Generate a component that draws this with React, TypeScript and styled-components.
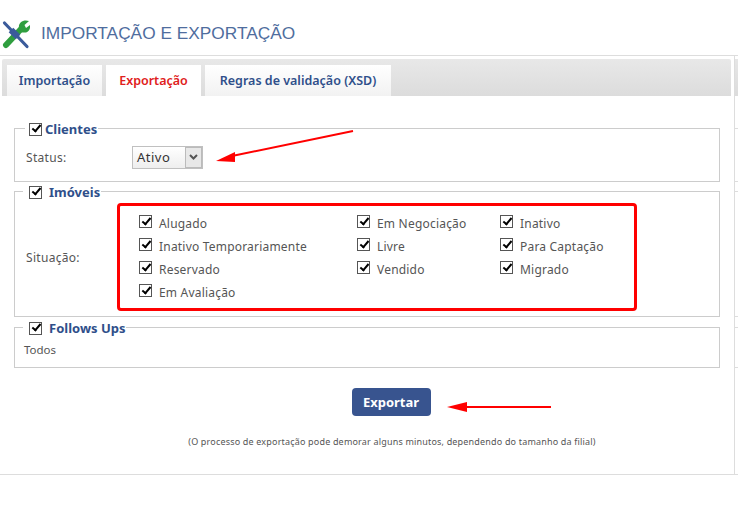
import React from 'react';
import styled, { createGlobalStyle } from 'styled-components';

const GlobalStyle = createGlobalStyle`
    html, body {
        margin: 0;
        padding: 0;
        background: #fff;
    }

    body {
        font-family: "Noto Sans", "Liberation Sans", sans-serif;
        font-size: 12px;
        color: #555;
    }
`;

const IconWrap = styled.span`
    display: flex;
    margin: 2px 1px 0 0;
`;

const ToolsIcon = () => (
    <IconWrap>
        <svg width="28" height="29" viewBox="0 0 28 29">
            <path d="M4 25 L20 8" stroke="#2f9e3f" strokeWidth="6" strokeLinecap="round" />
            <path d="M17 8 C16 3 21 -1 27 1 L22.500 5 L24 8 L28 5 C29 11 24 14 19 12 Z" fill="#2f9e3f" />
            <path d="M2.500 3 L25 26.500" stroke="#3b5b9b" strokeWidth="3.200" strokeLinecap="round" />
            <path d="M9 10 L16 17" stroke="#3b5b9b" strokeWidth="6.500" />
        </svg>
    </IconWrap>
);

const Annotations = styled.svg`
    position: absolute;
    left: 0;
    top: 0;
    pointer-events: none;
`;

const Page = styled.div`
    position: relative;
    width: 738px;
    height: 507px;
    overflow: hidden;
`;

const Header = styled.header`
    display: flex;
    align-items: center;
    gap: 10px;
    height: 56px;
    padding: 12px 0 0 2px;
    box-sizing: border-box;
    border-bottom: 1px solid #ddd;
`;

const Title = styled.h1`
    margin: 0;
    font-family: "Liberation Sans", sans-serif;
    font-size: 17.3px;
    font-weight: 400;
    color: #4f6d9e;
`;

const Panel = styled.div`
    display: flex;
    align-items: flex-start;
`;

const Main = styled.main`
    width: 735px;
    box-sizing: border-box;
    border-right: 1px solid #ddd;
`;

// lines of the next panel, which only just shows at the right edge
const sliverLines = [72, 125, 135, 260, 271, 311, 418]
    .map(y => `linear-gradient(#ddd, #ddd) 0 ${y}px / 100% 1px no-repeat`)
    .join(', ');

const Sliver = styled.div`
    flex: none;
    width: 3px;
    height: 419px;
    background: ${sliverLines}, linear-gradient(#e6e6e6, #dcdcdc) 0 3px / 100% 37px no-repeat;
`;

const TabBar = styled.div`
    display: flex;
    gap: 4px;
    margin: 3px 3px 0 2px;
    padding: 6px 0 0 5px;
    height: 31px;
    border-radius: 2px 2px 0 0;
    background: linear-gradient(#e8e8e8, #dcdcdc);
`;

const Tab = styled.div<{ $active?: boolean; $width: number }>`
    display: flex;
    align-items: center;
    justify-content: center;
    width: ${p => p.$width}px;
    font-size: 12.5px;
    font-weight: 600;
    color: ${p => (p.$active ? '#e02020' : '#2f4f8a')};
    background: ${p => (p.$active ? '#fff' : 'linear-gradient(#fff, #f2f2f2)')};
`;

const Content = styled.div`
    height: 379px;
    box-sizing: border-box;
    padding: 23px 14px 0;
    border-bottom: 1px solid #ddd;
`;

const Group = styled.fieldset<{ $height: number; $after?: number }>`
    margin: 0 0 ${p => p.$after ?? 0}px;
    padding: 0 10px;
    min-width: 0;
    height: ${p => p.$height}px;
    box-sizing: border-box;
    border: 1px solid #ccc;
`;

const Legend = styled.legend<{ $wide?: boolean }>`
    display: flex;
    align-items: center;
    gap: ${p => (p.$wide ? 7 : 3)}px;
    height: 18px;
    box-sizing: border-box;
    margin-left: ${p => (p.$wide ? -2 : 0)}px;
    padding: 2px 1px 0 ${p => (p.$wide ? 6 : 4)}px;
    font-size: 13px;
    font-weight: 700;
    color: #2f4f8a;
`;

const Check = styled.input.attrs({ type: 'checkbox', defaultChecked: true })`
    appearance: none;
    position: relative;
    flex: none;
    width: 13px;
    height: 13px;
    margin: 0;
    background: #fff;
    border: 1px solid #555;

    &::after {
        content: '';
        position: absolute;
        left: 3.5px;
        top: -0.5px;
        width: 3px;
        height: 7px;
        border: solid #000;
        border-width: 0 2px 2px 0;
        transform: rotate(40deg);
    }
`;

const Field = styled.div`
    display: flex;
    align-items: center;
    height: 40px;
`;

const Label = styled.span`
    width: 107px;
    box-sizing: border-box;
    padding-left: 1px;
    letter-spacing: 0.3px;
`;

const Select = styled.div`
    display: flex;
    align-items: stretch;
    width: 71px;
    height: 23px;
    box-sizing: border-box;
    border: 1px solid #c0c0c0;
    font-size: 13px;
    color: #333;
    background: linear-gradient(#fff, #eee);
`;

const SelectText = styled.span`
    flex: 1;
    padding-left: 4px;
    line-height: 21px;
    letter-spacing: 0.5px;
`;

const SelectButton = styled.span`
    display: flex;
    align-items: center;
    justify-content: center;
    width: 17px;
    box-sizing: border-box;
    border: 1px solid #bbb;
    background: #e8e8e8;
`;

const SituationRow = styled.div`
    display: flex;
    align-items: center;
    padding-top: 3px;
`;

const SituationLabel = styled(Label)`
    width: 92px;
`;

const OptionsBox = styled.div`
    display: grid;
    grid-template-columns: 218px 143px 1fr;
    grid-auto-rows: 23px;
    width: 520px;
    height: 108px;
    box-sizing: border-box;
    padding: 4px 0 0 19px;
    border: 3px solid #f00;
    border-radius: 4px;
`;

const Option = styled.label`
    display: flex;
    align-items: center;
    gap: 7px;
    letter-spacing: 0.2px;
`;

const OptionText = styled.span`
    padding-top: 3px;
`;

const Plain = styled.div`
    margin-left: -1px;
    padding-top: 6px;
    font-size: 11.5px;
`;

const Actions = styled.div`
    display: flex;
    flex-direction: column;
    align-items: center;
    margin-top: 20px;
    padding-left: 50px;
`;

const ExportButton = styled.button`
    width: 79px;
    height: 28px;
    margin-left: -2px;
    padding: 0;
    border: 0;
    border-radius: 4px;
    background: #38548f;
    color: #fff;
    font-family: inherit;
    font-size: 13px;
    font-weight: 700;
`;

const Note = styled.p`
    margin: 19px 0 0;
    font-size: 9px;
    letter-spacing: 0.18px;
`;

const options = [
    'Alugado', 'Em Negociação', 'Inativo',
    'Inativo Temporariamente', 'Livre', 'Para Captação',
    'Reservado', 'Vendido', 'Migrado',
    'Em Avaliação',
];

const App: React.FC = () => (
    <Page>
        <GlobalStyle />
        <Header>
            <ToolsIcon />
            <Title>IMPORTAÇÃO E EXPORTAÇÃO</Title>
        </Header>
        <Panel>
            <Main>
                <TabBar>
                    <Tab $width={95}>Importação</Tab>
                    <Tab $width={95} $active>Exportação</Tab>
                    <Tab $width={186}>Regras de validação (XSD)</Tab>
                </TabBar>
                <Content>
                    <Group $height={63}>
                        <Legend><Check />Clientes</Legend>
                        <Field>
                            <Label>Status:</Label>
                            <Select>
                                <SelectText>Ativo</SelectText>
                                <SelectButton>
                                    <svg width="9" height="6" viewBox="0 0 9 6">
                                        <path d="M1 1 L4.500 4.500 L8 1" stroke="#555" strokeWidth="2" fill="none" />
                                    </svg>
                                </SelectButton>
                            </Select>
                        </Field>
                    </Group>
                    <Group $height={135} $after={1}>
                        <Legend $wide><Check />Imóveis</Legend>
                        <SituationRow>
                            <SituationLabel>Situação:</SituationLabel>
                            <OptionsBox>
                                {options.map(option => (
                                    <Option key={option}><Check /><OptionText>{option}</OptionText></Option>
                                ))}
                            </OptionsBox>
                        </SituationRow>
                    </Group>
                    <Group $height={50}>
                        <Legend $wide><Check />Follows Ups</Legend>
                        <Plain>Todos</Plain>
                    </Group>
                    <Actions>
                        <ExportButton>Exportar</ExportButton>
                        <Note>(O processo de exportação pode demorar alguns minutos, dependendo do tamanho da filial)</Note>
                    </Actions>
                </Content>
            </Main>
            <Sliver />
        </Panel>
        <Annotations width="738" height="507" viewBox="0 0 738 507">
            <path d="M353 131 L232 156" stroke="#f00" strokeWidth="2" fill="none" />
            <path d="M216 161 L235 152 L235 162 Z" fill="#f00" />
            <path d="M465 407 L551 407" stroke="#f00" strokeWidth="2" fill="none" />
            <path d="M447 407 L467 402 L467 412 Z" fill="#f00" />
        </Annotations>
    </Page>
);

export default App;
